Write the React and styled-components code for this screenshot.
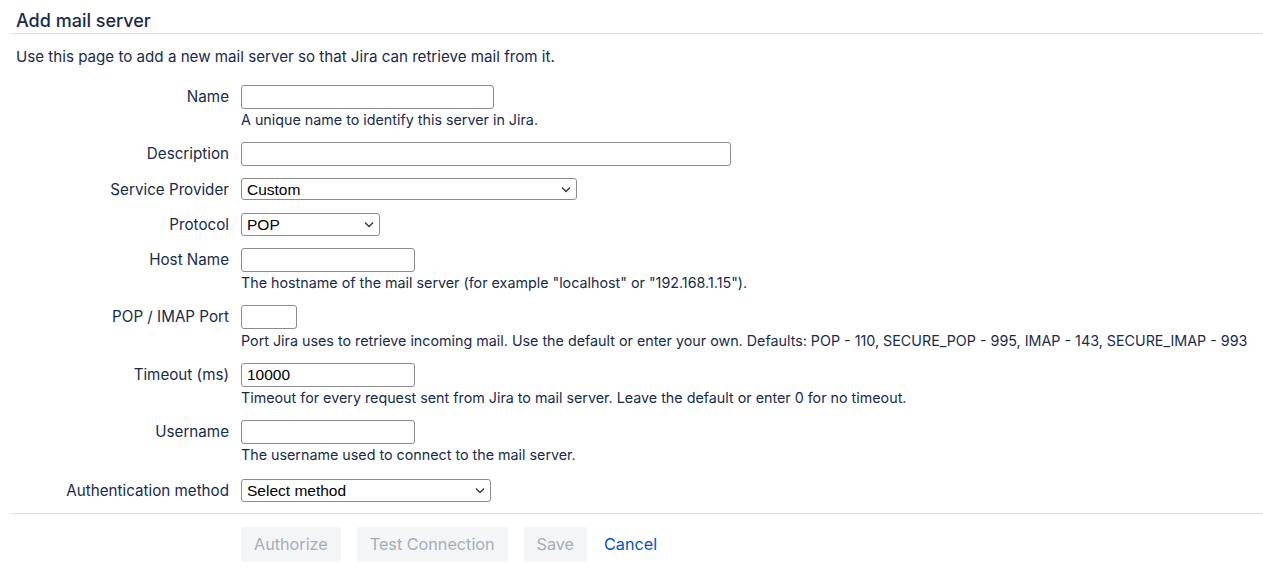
import React from "react";
import styled, { createGlobalStyle } from "styled-components";

const GlobalStyle = createGlobalStyle`
  body {
    margin: 0;
    background: #fff;
    font-family: Inter, "Liberation Sans", Arial, sans-serif;
    color: #172B4D;
  }
`;

const Page = styled.div`
  padding: 9px 0 0 10px;
`;

const Heading = styled.h2`
  margin: 0;
  padding: 0 6px;
  font-size: 18px;
  font-weight: 500;
  line-height: 24px;
  color: #172B4D;
  border-bottom: 1px solid #dfe1e6;
`;

const Intro = styled.p`
  margin: 13px 0 18px;
  padding: 0 6px;
  font-size: 15.15px;
  line-height: 20px;
`;

const Form = styled.form`
  display: flex;
  flex-direction: column;
  gap: 12px;
`;

const Row = styled.div`
  display: grid;
  grid-template-columns: 219px 1fr;
  column-gap: 12px;
  align-items: start;
  margin-top: ${(p) => p.$top || 0}px;
`;

const Label = styled.label`
  text-align: right;
  font-size: 15.2px;
  line-height: 23px;
`;

const Field = styled.div`
  display: flex;
  flex-direction: column;
  align-items: flex-start;
`;

const Input = styled.input`
  box-sizing: border-box;
  width: ${(p) => p.$w}px;
  height: 24px;
  border: 1px solid #8c8c8c;
  border-radius: 3px;
  padding: 0 5px;
  font-family: "Liberation Sans", Arial, sans-serif;
  font-size: 15.5px;
  color: #000;
  background: #fff;
`;

const SelectWrap = styled.div`
  position: relative;
  width: ${(p) => p.$w}px;
  height: ${(p) => p.$h}px;
`;

const Select = styled.select`
  box-sizing: border-box;
  appearance: none;
  width: 100%;
  height: 100%;
  border: 1px solid #8c8c8c;
  border-radius: 3px;
  padding: 0 5px;
  font-family: "Liberation Sans", Arial, sans-serif;
  font-size: 15.5px;
  color: #000;
  background: #fff;
`;

const Chevron = styled.svg`
  position: absolute;
  right: 6px;
  top: 8px;
  pointer-events: none;
`;

const Help = styled.div`
  margin-top: 1.2px;
  font-size: 14.3px;
  line-height: 20px;
  color: #172B4D;
  white-space: nowrap;
`;

const Divider = styled.hr`
  margin: 11px 0 13px;
  border: 0;
  border-top: 1px solid #dfe1e6;
`;

const Buttons = styled.div`
  display: flex;
  align-items: center;
  gap: 16px;
  padding-left: 231px;
`;

const Button = styled.button`
  height: 35px;
  padding: 0 13px;
  border: 0;
  border-radius: 3px;
  background: #f4f5f7;
  color: #a5adba;
  font-family: Inter, "Liberation Sans", Arial, sans-serif;
  font-size: 16.2px;
`;

const LinkButton = styled.a`
  color: #0052cc;
  font-size: 16.2px;
  text-decoration: none;
  margin-left: 1px;
`;

const Dropdown = ({ w, h = 22, value }) => (
  <SelectWrap $w={w} $h={h}>
    <Select defaultValue={value}>
      <option>{value}</option>
    </Select>
    <Chevron width="10" height="7" viewBox="0 0 10 7">
      <path d="M1 1.5 L5 5.5 L9 1.5" fill="none" stroke="#333" strokeWidth="1.3" />
    </Chevron>
  </SelectWrap>
);

export default function App() {
  return (
    <Page>
      <GlobalStyle />
      <Heading>Add mail server</Heading>
      <Intro>Use this page to add a new mail server so that Jira can retrieve mail from it.</Intro>
      <Form>
        <Row>
          <Label>Name</Label>
          <Field>
            <Input $w={253} />
            <Help>A unique name to identify this server in Jira.</Help>
          </Field>
        </Row>
        <Row>
          <Label>Description</Label>
          <Field>
            <Input $w={490} />
          </Field>
        </Row>
        <Row>
          <Label>Service Provider</Label>
          <Field>
            <Dropdown w={336} value="Custom" />
          </Field>
        </Row>
        <Row>
          <Label>Protocol</Label>
          <Field>
            <Dropdown w={139} h={23} value="POP" />
          </Field>
        </Row>
        <Row>
          <Label>Host Name</Label>
          <Field>
            <Input $w={174} />
            <Help>The hostname of the mail server (for example "localhost" or "192.168.1.15").</Help>
          </Field>
        </Row>
        <Row>
          <Label>POP / IMAP Port</Label>
          <Field>
            <Input $w={56} />
            <Help>
              Port Jira uses to retrieve incoming mail. Use the default or enter your own. Defaults: POP - 110, SECURE_POP - 995, IMAP - 143, SECURE_IMAP - 993
            </Help>
          </Field>
        </Row>
        <Row>
          <Label>Timeout (ms)</Label>
          <Field>
            <Input $w={174} defaultValue="10000" />
            <Help>Timeout for every request sent from Jira to mail server. Leave the default or enter 0 for no timeout.</Help>
          </Field>
        </Row>
        <Row>
          <Label>Username</Label>
          <Field>
            <Input $w={174} />
            <Help>The username used to connect to the mail server.</Help>
          </Field>
        </Row>
        <Row $top={2}>
          <Label>Authentication method</Label>
          <Field>
            <Dropdown w={250} h={23} value="Select method" />
          </Field>
        </Row>
      </Form>
      <Divider />
      <Buttons>
        <Button disabled>Authorize</Button>
        <Button disabled>Test Connection</Button>
        <Button disabled>Save</Button>
        <LinkButton href="#">Cancel</LinkButton>
      </Buttons>
    </Page>
  );
}
